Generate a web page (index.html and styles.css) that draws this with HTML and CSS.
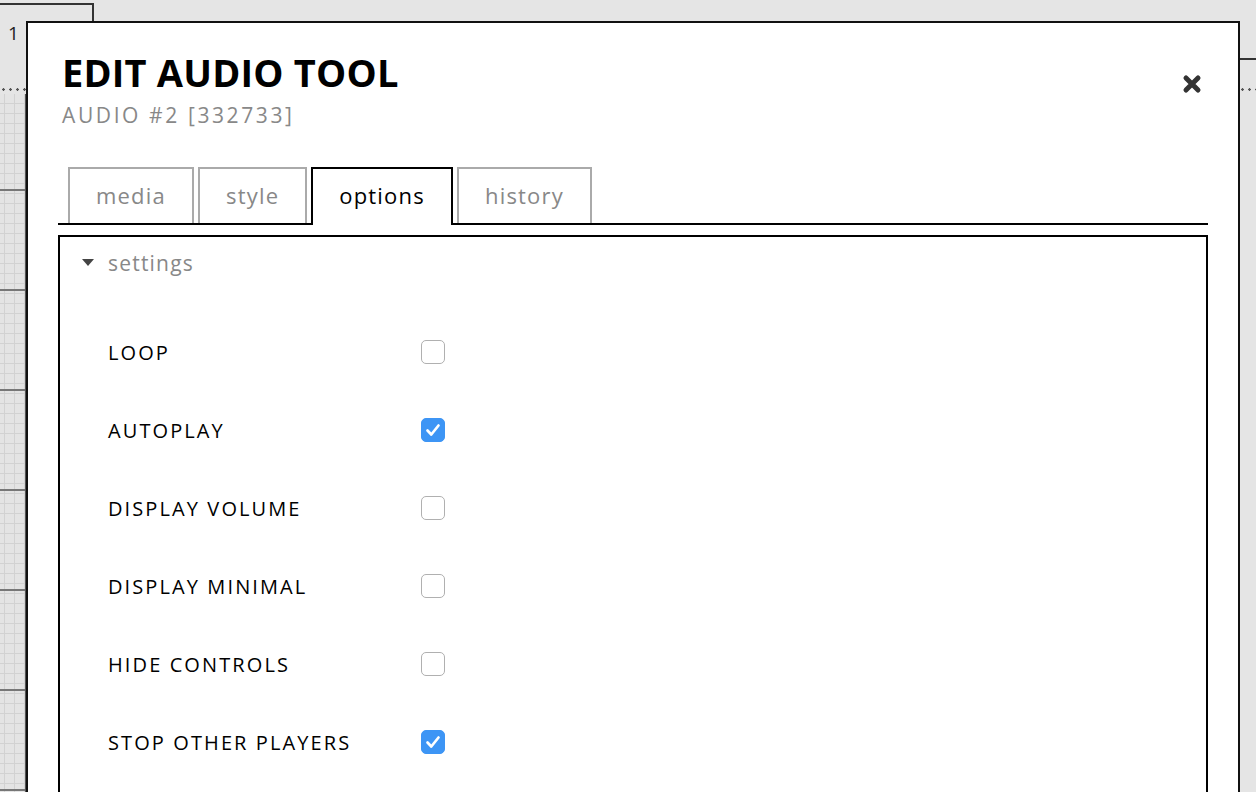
FILE: index.html
```html
<!DOCTYPE html>
<html>
<head>
<meta charset="utf-8">
<link rel="stylesheet" href="styles.css">
</head>
<body>
<div class="backdrop">
  <div class="bg-tab">1</div>
  <div class="bg-rule"></div>
  <div class="bg-dots"></div>
  <div class="bg-grid"></div>
</div>
<div class="modal">
  <div class="modal-head">
    <div class="titles">
      <h1 class="title">EDIT AUDIO TOOL</h1>
      <div class="subtitle">AUDIO #2 [332733]</div>
    </div>
    <button class="close" aria-label="close">
      <svg width="20" height="20" viewBox="0 0 20 20"><path d="M4 4 L16 16 M16 4 L4 16" stroke="#333" stroke-width="5" stroke-linecap="round"/></svg>
    </button>
  </div>
  <div class="tabs">
    <div class="tab">media</div>
    <div class="tab">style</div>
    <div class="tab active">options</div>
    <div class="tab">history</div>
  </div>
  <div class="panel">
    <div class="section-head">
      <svg class="caret" width="12" height="8" viewBox="0 0 12 8"><path d="M0 0 H12 L6 7 Z" fill="#444"/></svg>
      <span>settings</span>
    </div>
    <div class="rows">
      <div class="row"><span class="label">LOOP</span><span class="cb"></span></div>
      <div class="row"><span class="label">AUTOPLAY</span><span class="cb on"><svg viewBox="0 0 24 24" width="24" height="24"><path d="M6.5 12.5 L10.3 16.5 L17.5 7.5" fill="none" stroke="#fff" stroke-width="2.7" stroke-linecap="round" stroke-linejoin="round"/></svg></span></div>
      <div class="row"><span class="label">DISPLAY VOLUME</span><span class="cb"></span></div>
      <div class="row"><span class="label">DISPLAY MINIMAL</span><span class="cb"></span></div>
      <div class="row"><span class="label">HIDE CONTROLS</span><span class="cb"></span></div>
      <div class="row"><span class="label">STOP OTHER PLAYERS</span><span class="cb on"><svg viewBox="0 0 24 24" width="24" height="24"><path d="M6.5 12.5 L10.3 16.5 L17.5 7.5" fill="none" stroke="#fff" stroke-width="2.7" stroke-linecap="round" stroke-linejoin="round"/></svg></span></div>
    </div>
  </div>
</div>
</body>
</html>
```

FILE: styles.css
```css
* { box-sizing: border-box; }
html, body { margin: 0; padding: 0; }
body {
  width: 1256px;
  height: 792px;
  overflow: hidden;
  background: #e5e5e5;
  position: relative;
  font-family: "Open Sans", "Noto Sans", sans-serif;
}
.backdrop { position: absolute; inset: 0; }
.bg-tab {
  position: absolute;
  left: -2px;
  top: 3px;
  width: 96px;
  height: 120px;
  border: 2px solid #333;
  padding: 15px 0 0 8px;
  font-size: 19px;
  color: #222;
}
.bg-rule {
  position: absolute;
  left: 1200px;
  right: 0;
  top: 58px;
  height: 2px;
  background: #333;
}
.bg-dots {
  position: absolute;
  left: 0;
  right: 0;
  top: 88px;
  height: 3px;
  background-image: radial-gradient(circle, #555 1px, transparent 1.5px);
  background-size: 7px 3px;
}
.bg-grid {
  position: absolute;
  left: 0;
  width: 27px;
  top: 94px;
  bottom: 0;
  border-right: 2px solid #555;
  background-color: #e4e4e4;
  background-image:
    linear-gradient(to bottom, transparent 95px, #777 95px, #777 97px, transparent 97px),
    linear-gradient(to bottom, transparent 9px, #d2d2d2 9px),
    linear-gradient(to right, transparent 9px, #d2d2d2 9px);
  background-size: 100% 100px, 10px 10px, 10px 10px;
  background-position: 0 0, 0 0, 5px 0;
}
.modal {
  position: absolute;
  left: 26px;
  top: 21px;
  width: 1214px;
  height: 820px;
  background: #fff;
  border: 2px solid #111;
  padding: 27px 30px 0 30px;
}
.modal-head {
  display: flex;
  justify-content: space-between;
  align-items: flex-start;
  padding-left: 4px;
}
.title {
  margin: 0;
  font-size: 38px;
  line-height: 44px;
  font-weight: 700;
  letter-spacing: 0.2px;
  color: #000;
}
.subtitle {
  margin-top: 8px;
  font-size: 21px;
  line-height: 26px;
  letter-spacing: 2.6px;
  color: #888;
}
.close {
  border: 0;
  background: none;
  padding: 0;
  margin: 24px 6px 0 0;
  width: 20px;
  height: 20px;
  display: flex;
}
.tabs {
  margin-top: 39px;
  display: flex;
  align-items: flex-end;
  gap: 4px;
  padding-left: 10px;
  border-bottom: 2px solid #000;
  height: 58px;
}
.tab {
  height: 56px;
  border: 2px solid #aaa;
  border-bottom: 0;
  display: flex;
  align-items: center;
  justify-content: center;
  padding: 0 26px 2px;
  font-size: 22px;
  letter-spacing: 1.2px;
  color: #888;
}
.tab.active {
  border-color: #000;
  color: #000;
  background: #fff;
  height: 58px;
  margin-bottom: -2px;
  padding-bottom: 4px;
}
.panel {
  margin-top: 10px;
  border: 2px solid #000;
  height: 600px;
  padding: 12px 22px;
}
.section-head {
  display: flex;
  align-items: center;
  gap: 14px;
  font-size: 21px;
  letter-spacing: 1.2px;
  color: #888;
}
.rows {
  padding-top: 63px;
  padding-left: 26px;
  display: flex;
  flex-direction: column;
  gap: 54px;
}
.row {
  display: flex;
  align-items: center;
  height: 24px;
}
.label {
  width: 313px;
  font-size: 20px;
  letter-spacing: 2.1px;
  color: #000;
}
.cb {
  width: 24px;
  height: 24px;
  border: 1px solid #b0b0b0;
  border-radius: 5px;
  background: #fff;
  display: flex;
}
.cb.on {
  border-color: #3d95f5;
  background: #3d95f5;
}
.cb.on svg { margin: -1px; }
```
